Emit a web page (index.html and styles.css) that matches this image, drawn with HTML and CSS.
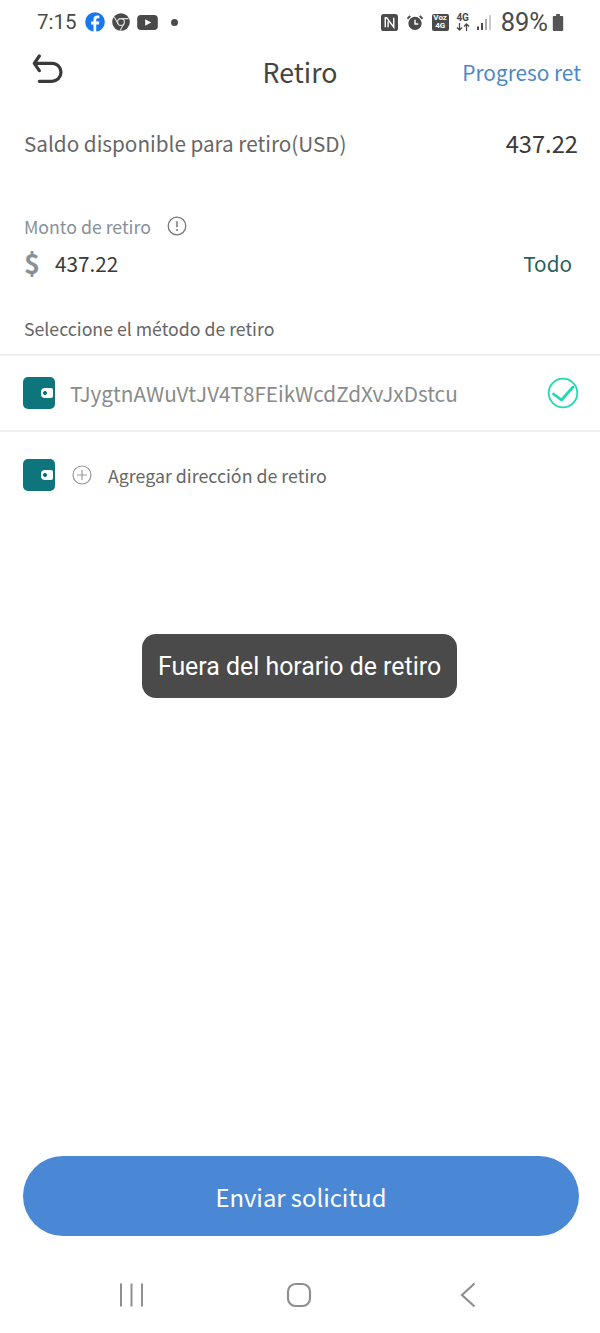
FILE: index.html
```html
<!DOCTYPE html>
<html lang="es">
<head>
  <meta charset="UTF-8" />
  <meta name="viewport" content="width=device-width, initial-scale=1.0" />
  <title>Retiro</title>
  <link rel="stylesheet" href="styles.css">
</head>
<body>
  <div class="phone">
    <div class="status-bar">
      <div class="status-left">
        <span class="clock">7:15</span>
        <svg class="st-fb" width="20" height="20" viewBox="0 0 21 21"><circle cx="10.5" cy="10.5" r="10.3" fill="#1877f2"/><path d="M11.8 21v-8h2.7l.5-3h-3.200V8.200c0-.9.4-1.600 1.700-1.600H15V4c-.5-.1-1.300-.2-2.200-.2-2.400 0-3.900 1.400-3.900 4V10H6.300v3h2.600v8z" fill="#fff"/></svg>
        <svg class="st-chrome" width="18" height="18" viewBox="0 0 19 19"><circle cx="9.500" cy="9.500" r="9.300" fill="#4a4a4a"/><circle cx="9.500" cy="9.500" r="3.600" fill="#4a4a4a" stroke="#ddd" stroke-width="1.200"/><path d="M9.500 5.900h8M6.400 11.300 2.500 4.500M12.600 11.300 8.500 18.500" stroke="#ddd" stroke-width="1.200"/></svg>
        <svg class="st-yt" width="21" height="15" viewBox="0 0 22 16"><rect width="22" height="16" rx="4" fill="#4a4a4a"/><path d="M8.500 4.500 15 8l-6.500 3.500z" fill="#fff"/></svg>
        <span class="st-dot"></span>
      </div>
      <div class="status-right">
        <svg class="st-nfc" width="17" height="17" viewBox="0 0 18 18"><rect width="18" height="18" rx="3" fill="#4a4a4a"/><path d="M4.500 14V4h1.500l7.500 10V4M7.500 14V8" fill="none" stroke="#fff" stroke-width="1.500"/></svg>
        <svg class="st-alarm" width="18" height="17" viewBox="0 0 18 18"><circle cx="9" cy="10" r="7" fill="#4a4a4a"/><path d="M9 6v4.500h3.500" fill="none" stroke="#fff" stroke-width="1.500"/><path d="M1 5l3-3M17 5l-3-3" stroke="#4a4a4a" stroke-width="2"/></svg>
        <span class="volte">Voz<br>4G</span>
        <span class="net">
          <span class="net-label">4G</span>
          <svg width="14" height="8" viewBox="0 0 14 8"><path d="M3.500 0v7M1 4.500 3.500 7 6 4.500M10.500 8V1M8 3.500 10.500 1 13 3.500" fill="none" stroke="#4a4a4a" stroke-width="1.300"/></svg>
        </span>
        <svg class="st-signal" width="15" height="16" viewBox="0 0 15 16"><rect x="0" y="12.500" width="2" height="3.500" fill="#4a4a4a"/><rect x="4" y="9" width="2" height="7" fill="#4a4a4a"/><rect x="8" y="5" width="2" height="11" fill="#aaa"/><rect x="12" y="1" width="2" height="15" fill="#ccc"/></svg>
        <span class="battery-text">89%</span>
        <svg width="12" height="17" viewBox="0 0 12 18"><path d="M4 0h4v2h2.500a1 1 0 0 1 1 1v14a1 1 0 0 1-1 1h-9a1 1 0 0 1-1-1V3a1 1 0 0 1 1-1H4z" fill="#555"/></svg>
      </div>
    </div>

    <header class="top-nav">
      <svg class="back-icon" width="32" height="32" viewBox="0 0 32 32"><path d="M7.300 2 2.300 9.300l5 7.300M3 9.300H20a9 9 0 0 1 0 18H7.300" fill="none" stroke="#3a3a3a" stroke-width="3.200" stroke-linecap="round" stroke-linejoin="round"/></svg>
      <h1>Retiro</h1>
      <a class="progress-link">Progreso ret</a>
    </header>

    <main class="content">
      <div class="balance-row">
        <span class="balance-label">Saldo disponible para retiro(USD)</span>
        <span class="balance-value">437.22</span>
      </div>

      <div class="amount-block">
        <div class="amount-label">
          <span>Monto de retiro</span>
          <svg width="20" height="20" viewBox="0 0 20 20"><circle cx="10" cy="10" r="8.800" fill="none" stroke="#777" stroke-width="1.300"/><path d="M10 5.200v6" stroke="#777" stroke-width="1.500"/><circle cx="10" cy="14" r="1" fill="#777"/></svg>
        </div>
        <div class="amount-row">
          <span class="currency">$</span>
          <span class="amount-value">437.22</span>
          <span class="all-btn">Todo</span>
        </div>
      </div>

      <div class="method-title">Seleccione el método de retiro</div>

      <div class="method-row selected">
        <span class="wallet"><span class="wallet-tab"></span></span>
        <span class="address">TJygtnAWuVtJV4T8FEikWcdZdXvJxDstcu</span>
        <svg class="check" width="32" height="32" viewBox="0 0 32 32"><circle cx="16" cy="16" r="14.300" fill="none" stroke="#22d8b0" stroke-width="1.800"/><path d="M6.500 17 14.500 23 26 10" fill="none" stroke="#22d8b0" stroke-width="2.800" stroke-linecap="round" stroke-linejoin="round"/></svg>
      </div>

      <div class="method-row add">
        <span class="wallet"><span class="wallet-tab"></span></span>
        <svg class="plus" width="20" height="20" viewBox="0 0 20 20"><circle cx="10" cy="10" r="9" fill="none" stroke="#999" stroke-width="1.200"/><path d="M10 5v10M5 10h10" stroke="#999" stroke-width="1.200"/></svg>
        <span class="add-text">Agregar dirección de retiro</span>
      </div>
    </main>

    <div class="toast">Fuera del horario de retiro</div>

    <div class="submit-wrap">
      <button class="submit-btn">Enviar solicitud</button>
    </div>

    <nav class="nav-bar">
      <svg width="26" height="24" viewBox="0 0 26 24"><path d="M2 .5v23M12.500 .5v23M23 .5v23" stroke="#8f8f8f" stroke-width="2"/></svg>
      <svg class="nav-home" width="26" height="26" viewBox="0 0 26 26"><rect x="2" y="2" width="22" height="22" rx="7.500" fill="none" stroke="#8f8f8f" stroke-width="2.200"/></svg>
      <svg width="16" height="26" viewBox="0 0 16 26"><path d="M14.500 1.500 2 13l12.500 11.500" fill="none" stroke="#8f8f8f" stroke-width="2.200"/></svg>
    </nav>
  </div>
</body>
</html>
```

FILE: styles.css
```css
* {
  box-sizing: border-box;
}

body {
  margin: 0;
  background: #fff;
  font-family: "Noto Sans CJK SC", "Noto Sans", sans-serif;
  color: #333;
}

.phone {
  position: relative;
  width: 600px;
  height: 1333px;
  display: flex;
  flex-direction: column;
  overflow: hidden;
}

.status-bar {
  height: 44px;
  padding: 0 36px 0 37px;
  display: flex;
  justify-content: space-between;
  align-items: center;
  font-family: Roboto, sans-serif;
  color: #4a4a4a;
}

.status-left,
.status-right {
  display: flex;
  align-items: center;
}

.clock {
  font-size: 20.500px;
  margin-right: 8px;
}

.st-chrome {
  margin-left: 7px;
}

.st-yt {
  margin-left: 7px;
}

.st-dot {
  width: 7px;
  height: 7px;
  border-radius: 50%;
  background: #4a4a4a;
  margin-left: 13px;
}

.st-alarm {
  margin-left: 8px;
}

.volte {
  width: 17px;
  height: 17px;
  margin-left: 8px;
  border-radius: 2px;
  background: #4a4a4a;
  color: #fff;
  font-size: 8px;
  font-weight: 700;
  line-height: 8.500px;
  text-align: center;
}

.net {
  display: flex;
  flex-direction: column;
  align-items: center;
  gap: 1px;
  width: 14px;
  margin-left: 7px;
}

.net-label {
  font-size: 10px;
  font-weight: 700;
  line-height: 9px;
}

.st-signal {
  margin-left: 7px;
}

.battery-text {
  font-size: 25.500px;
  margin-left: 9px;
  margin-right: 4px;
}

.top-nav {
  position: relative;
  height: 56px;
  padding: 0 19px 0 32px;
  display: flex;
  justify-content: space-between;
  align-items: center;
}

.back-icon {
  margin-top: -4px;
}

.top-nav h1 {
  position: absolute;
  left: 0;
  right: 0;
  margin: 0;
  text-align: center;
  font-size: 26.700px;
  font-weight: 400;
  line-height: 56px;
  color: #444;
  pointer-events: none;
}

.progress-link {
  font-size: 20.800px;
  line-height: 54px;
  color: #4a88c7;
}

.content {
  display: flex;
  flex-direction: column;
}

.balance-row {
  height: 28px;
  margin-top: 29px;
  padding: 0 22px 0 24px;
  display: flex;
  justify-content: space-between;
  align-items: center;
}

.balance-label {
  font-size: 20.700px;
  color: #666;
}

.balance-value {
  font-size: 23.700px;
  color: #3a3a3a;
}

.amount-block {
  padding: 0 28px 0 24px;
  margin-top: 57px;
}

.amount-label {
  display: flex;
  align-items: center;
  gap: 16px;
  height: 24px;
  font-size: 17.700px;
  color: #87909a;
}

.amount-row {
  display: flex;
  align-items: center;
  height: 34px;
  margin-top: 8px;
}

.currency {
  width: 31px;
  font-size: 27px;
  font-weight: 700;
  line-height: 34px;
  color: #87909a;
}

.amount-value {
  flex: 1;
  font-size: 20.700px;
  color: #3a3a3a;
}

.all-btn {
  font-size: 20.700px;
  color: #2b5f60;
}

.method-title {
  height: 24px;
  padding: 0 24px;
  margin-top: 36px;
  font-size: 17.700px;
  line-height: 24px;
  color: #666;
}

.method-row {
  display: flex;
  align-items: center;
  padding: 0 21px 0 23px;
}

.method-row.selected {
  height: 78px;
  margin-top: 14px;
  border-top: 2px solid #f0f0f0;
  border-bottom: 2px solid #f0f0f0;
}

.method-row.add {
  height: 86px;
}

.wallet {
  position: relative;
  flex: none;
  width: 32px;
  height: 32px;
  border-radius: 5px;
  background: #0f757c;
}

.wallet-tab {
  position: absolute;
  right: 2px;
  top: 11px;
  width: 12px;
  height: 10px;
  background: radial-gradient(circle at 4px 5px, #0f757c 1.800px, #fff 2.200px);
  border-radius: 4px 2px 2px 4px;
}

.address {
  flex: 1;
  margin-left: 15px;
  font-size: 20.700px;
  color: #8a8a8a;
}

.plus {
  margin-left: 17px;
}

.add-text {
  margin-left: 16px;
  font-size: 17.800px;
  color: #666;
}

.toast {
  position: absolute;
  left: 142px;
  top: 634px;
  width: 315px;
  height: 64px;
  border-radius: 14px;
  background: #4a4a4a;
  color: #fff;
  font-family: Roboto, sans-serif;
  font-size: 24.900px;
  line-height: 66px;
  text-align: center;
}

.submit-wrap {
  margin-top: auto;
  padding: 0 21px 0 23px;
}

.submit-btn {
  display: block;
  width: 100%;
  height: 80px;
  border: none;
  border-radius: 40px;
  background: #4a88d6;
  color: #fff;
  font-family: inherit;
  font-size: 23.800px;
}

.nav-bar {
  height: 97px;
  padding: 20px 124px 0 119px;
  display: flex;
  justify-content: space-between;
  align-items: center;
}

.nav-home {
  margin-right: 7px;
}
```
